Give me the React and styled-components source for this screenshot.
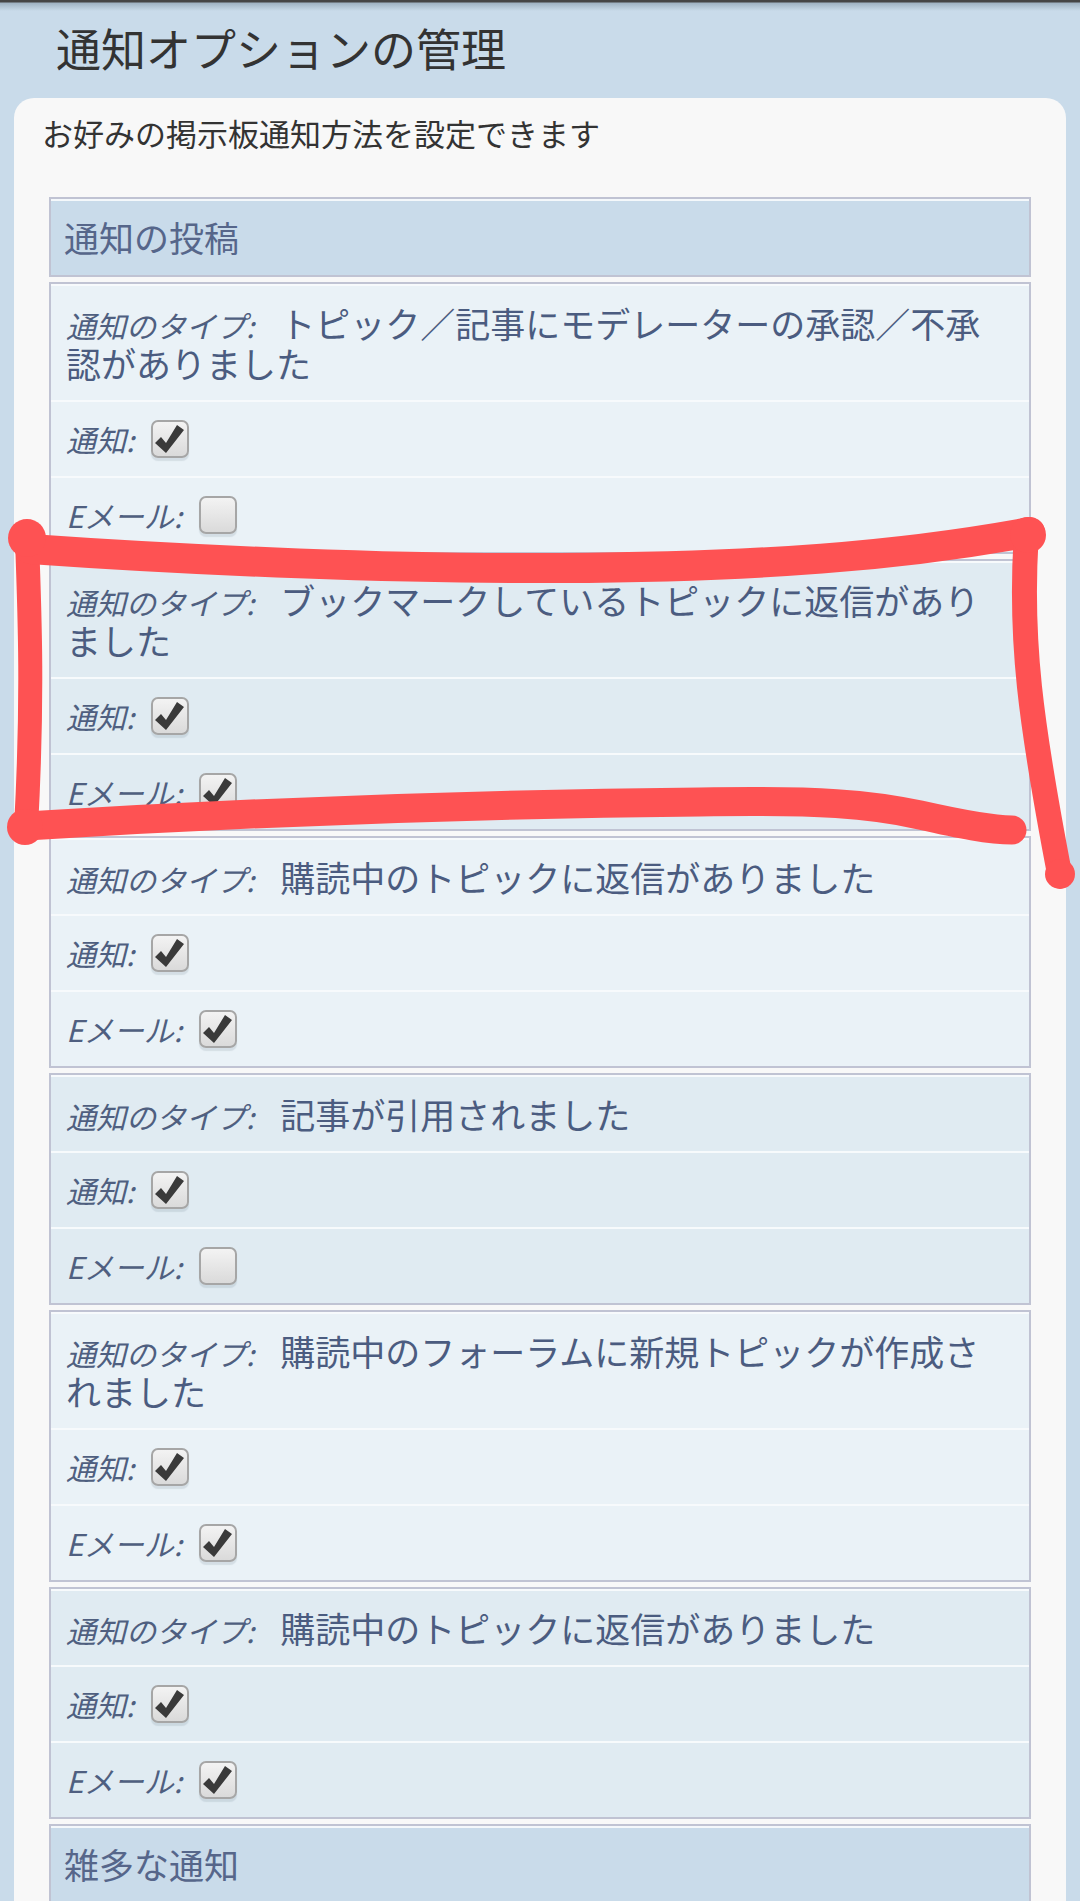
import React from "react";
import styled, { createGlobalStyle } from "styled-components";

const GlobalStyle = createGlobalStyle`
  body {
    margin: 0;
    background: #c9dbea;
    font-family: "Noto Sans CJK JP", "Noto Sans", sans-serif;
  }
`;

const Page = styled.div`
  position: relative;
  width: 1080px;
  height: 1901px;
  overflow: hidden;
  background: linear-gradient(to bottom, #454545 0, #454545 2px, #9fb2c2 3px, #c9dbea 11px) no-repeat, #c9dbea;
`;

const Title = styled.h1`
  margin: 0;
  padding: 18px 0 20px 56px;
  font-size: 45px;
  line-height: 60px;
  font-weight: 400;
  color: #333;
`;

const Card = styled.div`
  margin: 0 14px;
  min-height: 1800px;
  padding: 15px 0 40px;
  background: #f8f8f8;
  border-radius: 20px 20px 0 0;
`;

const Intro = styled.p`
  margin: 0 0 44px;
  padding-left: 28px;
  font-size: 31px;
  line-height: 40px;
  color: #333;
`;

const Panel = styled.div`
  display: flex;
  flex-direction: column;
  gap: 5px;
  padding: 0 35px;
`;

const SectionHead = styled.h2`
  margin: 0;
  padding: 18px 13px;
  border: 2px solid #c0c3d3;
  background: #c9dbea;
  box-shadow: inset 0 2px 0 #f4f8fb;
  font-size: 35px;
  line-height: 40px;
  font-weight: 400;
  color: #56668a;
`;

const Block = styled.div`
  border: 2px solid #c0c3d3;
  background: ${(p) => (p.$alt ? "#e0ebf2" : "#eaf2f7")};
`;

const TypeRow = styled.div`
  padding: 17px 20px 17px 15px;
  border-top: 2px solid #f7fafc;
  font-size: 35px;
  line-height: 40px;
  color: #4b5c80;
`;

const Label = styled.em`
  margin-right: ${(p) => (p.$gap ? "26px" : "0")};
  font-size: 30px;
  line-height: 30px;
  font-style: italic;
  color: #4f5f80;
`;

const CheckRow = styled.div`
  display: flex;
  align-items: center;
  gap: 17px;
  height: 74px;
  padding: 0 15px;
  border-top: 2px solid #f7fafc;
`;

const Box = styled.span`
  display: flex;
  align-items: center;
  justify-content: center;
  box-sizing: border-box;
  width: 38px;
  height: 38px;
  border: 2px solid #a6a6a6;
  border-radius: 7px;
  background: linear-gradient(#f3f3f3, #dadada);
  box-shadow: 0 3px 1px rgba(60, 80, 100, 0.12);
`;

const Overlay = styled.svg`
  position: absolute;
  top: 0;
  left: 0;
  pointer-events: none;
`;

const Checkbox = ({ checked }) => (
  <Box>
    {checked && (
      <svg width="34" height="34" viewBox="0 0 34 34">
        <polygon points="2,21 8,15 13,21 24,3 31,8 13,31" fill="#3a3a3a" />
      </svg>
    )}
  </Box>
);

const items = [
  { type: "トピック／記事にモデレーターの承認／不承認がありました", notify: true, email: false },
  { type: "ブックマークしているトピックに返信がありました", notify: true, email: true },
  { type: "購読中のトピックに返信がありました", notify: true, email: true },
  { type: "記事が引用されました", notify: true, email: false },
  { type: "購読中のフォーラムに新規トピックが作成されました", notify: true, email: true },
  { type: "購読中のトピックに返信がありました", notify: true, email: true },
];

const Marker = () => (
  <Overlay width="1080" height="1901" viewBox="0 0 1080 1901">
    <g fill="none" stroke="#fe5253" strokeLinecap="round" strokeLinejoin="round">
      <path d="M27,540 C30,620 33,700 26,828" strokeWidth="24" />
      <path d="M30,549 C200,561 400,569 560,568 C760,567 900,556 1030,532" strokeWidth="30" />
      <path d="M1026,540 C1020,640 1030,720 1060,876" strokeWidth="25" />
      <path d="M26,826 C250,812 500,804 700,802 C820,800 870,804 920,815 C960,824 990,830 1012,830" strokeWidth="29" />
    </g>
    <g fill="#fe5253">
      <circle cx="27" cy="538" r="19" />
      <circle cx="25" cy="827" r="18" />
      <circle cx="1028" cy="535" r="18" />
      <circle cx="1060" cy="874" r="15" />
    </g>
  </Overlay>
);

export default function App() {
  return (
    <Page>
      <GlobalStyle />
      <Title>通知オプションの管理</Title>
      <Card>
        <Intro>お好みの掲示板通知方法を設定できます</Intro>
        <Panel>
          <SectionHead>通知の投稿</SectionHead>
          {items.map((item, i) => (
            <Block key={i} $alt={i % 2 === 1}>
              <TypeRow>
                <Label $gap>通知のタイプ:</Label>
                {item.type}
              </TypeRow>
              <CheckRow>
                <Label>通知:</Label>
                <Checkbox checked={item.notify} />
              </CheckRow>
              <CheckRow>
                <Label>Eメール:</Label>
                <Checkbox checked={item.email} />
              </CheckRow>
            </Block>
          ))}
          <SectionHead>雑多な通知</SectionHead>
        </Panel>
      </Card>
      <Marker />
    </Page>
  );
}
